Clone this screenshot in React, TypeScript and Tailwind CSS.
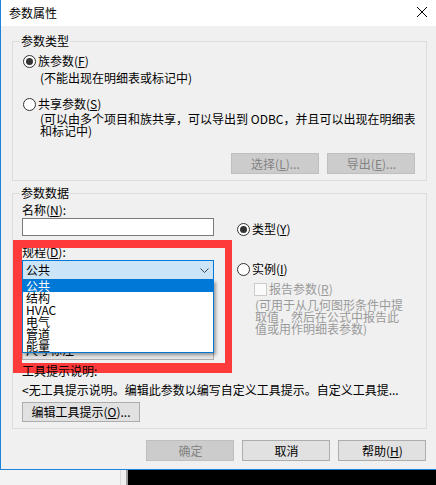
import React from "react";

const Radio = ({ checked }: { checked?: boolean }) => (
  <svg width="13" height="13" viewBox="0 0 13 13" className="shrink-0">
    <circle cx="6.5" cy="6.5" r="6" fill="#fff" stroke="#333" />
    {checked && <circle cx="6.5" cy="6.5" r="3.5" fill="#333" />}
  </svg>
);

const U = ({ c }: { c: string }) => <span className="underline underline-offset-1">{c}</span>;

const Btn = ({ children, disabled, w = "w-[88px]" }: { children: React.ReactNode; disabled?: boolean; w?: string }) => (
  <div
    className={
      disabled
        ? `${w} h-[21px] flex items-center justify-center border border-[#bfbfbf] bg-[#cccccc] text-[#838383] leading-[14px]`
        : `${w} h-[21px] flex items-center justify-center border border-[#adadad] bg-[#e1e1e1] text-black leading-[14px]`
    }
  >
    {children}
  </div>
);

const Chevron = () => (
  <svg width="9" height="5" viewBox="0 0 9 5">
    <polyline points="0.5,0.5 4.5,4.5 8.5,0.5" fill="none" stroke="#444" strokeWidth="1" />
  </svg>
);

const items = ["结构", "HVAC", "电气", "管道", "能量"];

const App = () => {
  return (
    <div className="relative w-[436px] h-[485px] overflow-hidden bg-[#f0f0f0] text-[12px] text-black font-['Noto_Sans_CJK_SC',sans-serif]">
      <div className="flex h-[470px]">
        <div className="w-[3px] bg-[#e4e4e4]" />
        <div className="flex flex-1 flex-col border-l border-b border-[#1c84d8] bg-[#f0f0f0]">
          {/* title bar */}
          <div className="flex h-[26px] shrink-0 items-center justify-between bg-white pl-[8px] pr-[10px]">
            <span className="leading-[14px]">参数属性</span>
            <svg width="10" height="10" viewBox="0 0 10 10" className="mb-[2px]">
              <path d="M0 0 L10 10 M10 0 L0 10" stroke="#000" strokeWidth="1" />
            </svg>
          </div>

          <div className="pl-[11px] pr-[10px]">
            {/* 参数类型 */}
            <fieldset className="mt-[8px] border border-[#dcdcdc]">
              <legend className="ml-[7px] px-[1px] leading-[14px]">参数类型</legend>
              <div className="pl-[10px] pr-[11px] pt-[6px] pb-[6px]">
                <div className="flex h-[14px] items-center gap-[2px] leading-[14px]">
                  <Radio checked />
                  <span>族参数(<U c="F" />)</span>
                </div>
                <div className="mt-[4px] pl-[17px] leading-[12px]">(不能出现在明细表或标记中)</div>
                <div className="mt-[13px] flex h-[14px] items-center gap-[2px] leading-[14px]">
                  <Radio />
                  <span>共享参数(<U c="S" />)</span>
                </div>
                <div className="mt-[2px] pl-[17px] leading-[12px] whitespace-nowrap">
                  <div>(可以由多个项目和族共享，可以导出到 ODBC，并且可以出现在明细表</div>
                  <div>和标记中)</div>
                </div>
                <div className="mt-[16px] flex justify-end gap-[8px]">
                  <Btn disabled>选择(<U c="L" />)...</Btn>
                  <Btn disabled>导出(<U c="E" />)...</Btn>
                </div>
              </div>
            </fieldset>

            {/* 参数数据 */}
            <fieldset className="mt-[5px] border border-[#dcdcdc]">
              <legend className="ml-[7px] px-[1px] leading-[14px]">参数数据</legend>
              <div className="pl-[9px] pr-[10px] pt-[3px] pb-[6px]">
                <div className="flex">
                  <div className="w-[192px]">
                    <div className="h-[14px] leading-[14px]">名称(<U c="N" />):</div>
                    <div className="mt-[1px] h-[18px] border border-[#7a7a7a] bg-white" />
                    <div className="mt-[9px] h-[14px] leading-[14px]">规程(<U c="D" />):</div>
                    <div className="relative mt-[1px]">
                      <div className="flex h-[20px] items-center justify-between border border-[#0078d7] bg-[#cce4f7] pl-[3px] pr-[4px] leading-[14px]">
                        <span>公共</span>
                        <Chevron />
                      </div>
                      <div className="absolute left-0 top-[20px] z-10 w-[192px] border-x border-b border-[#0078d7] bg-white shadow-[2px_2px_3px_rgba(0,0,0,0.35)]">
                        <div className="h-[12px] bg-[#0078d7] pl-[3px] leading-[12px] text-white">公共</div>
                        {items.map((t) => (
                          <div key={t} className="h-[12px] pl-[3px] leading-[12px]">
                            {t}
                          </div>
                        ))}
                      </div>
                    </div>
                    {/* rows hidden behind the open list */}
                    <div className="h-[60px]" />
                    <div className="flex h-[20px] items-end overflow-hidden border border-[#adadad] bg-[#e5e5e5] pl-[3px] leading-[14px]">
                      <span className="mb-[2px]">尺寸标注</span>
                    </div>
                  </div>
                  <div className="ml-[23px]">
                    <div className="mt-[19px] flex h-[14px] items-center gap-[2px] leading-[14px]">
                      <Radio checked />
                      <span>类型(<U c="Y" />)</span>
                    </div>
                    <div className="mt-[26px] flex h-[14px] items-center gap-[2px] leading-[14px]">
                      <Radio />
                      <span>实例(<U c="I" />)</span>
                    </div>
                    <div className="mt-[6px] flex h-[14px] items-center gap-[2px] pl-[17px] leading-[14px] text-[#9a9a9a]">
                      <div className="h-[13px] w-[13px] border border-[#cccccc] bg-[#fafafa]" />
                      <span>报告参数(<U c="R" />)</span>
                    </div>
                    <div className="mt-[3px] pl-[18px] leading-[12px] whitespace-nowrap text-[#9a9a9a]">
                      <div>(可用于从几何图形条件中提</div>
                      <div>取值，然后在公式中报告此</div>
                      <div>值或用作明细表参数)</div>
                    </div>
                  </div>
                </div>
                <div className="relative z-20 mt-[4px] h-[14px] leading-[14px]">工具提示说明:</div>
                <div className="mt-[5px] h-[14px] leading-[14px] whitespace-nowrap">
                  &lt;无工具提示说明。编辑此参数以编写自定义工具提示。自定义工具提...
                </div>
                <div className="mt-[5px]">
                  <div className="flex h-[20px] w-[118px] items-center justify-center border border-[#adadad] bg-[#e1e1e1] leading-[14px]">
                    编辑工具提示(<U c="O" />)...
                  </div>
                </div>
              </div>
            </fieldset>

            <div className="mt-[11px] flex justify-end gap-[8px] pr-[1px]">
              <Btn disabled>确定</Btn>
              <Btn>取消</Btn>
              <Btn>帮助(<U c="H" />)</Btn>
            </div>
          </div>
        </div>
      </div>

      {/* area below the dialog */}
      <div className="flex h-[15px]">
        <div className="w-[120px] bg-[#f3f3f3]" />
        <div className="w-[1px] bg-[#dadada]" />
        <div className="w-[5px] bg-[#f0f0f0]" />
        <div className="w-[2px] bg-[#a0a0a0]" />
        <div className="flex-1 bg-black" />
      </div>

      {/* red annotation box */}
      <div className="absolute left-[13px] top-[240px] z-10 h-[133px] w-[219px] border-solid border-[#ff3a3a] border-l-[9px] border-t-[8px] border-r-[7px] border-b-[10px]" />
    </div>
  );
};

export default App;
